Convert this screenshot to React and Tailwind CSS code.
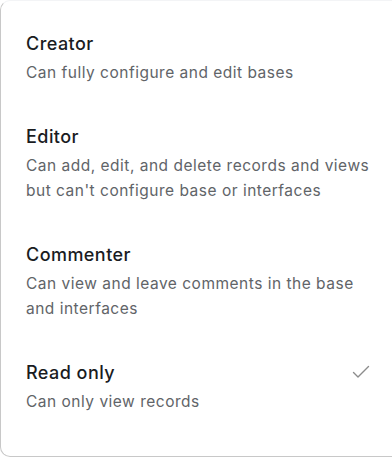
import React from "react";

const items = [
  { title: "Creator", desc: ["Can fully configure and edit bases"] },
  {
    title: "Editor",
    desc: ["Can add, edit, and delete records and views", "but can't configure base or interfaces"],
  },
  { title: "Commenter", desc: ["Can view and leave comments in the base", "and interfaces"] },
  { title: "Read only", desc: ["Can only view records"], checked: true },
];

export default function App() {
  return (
    <div className="w-[392px] h-[458px] bg-white overflow-hidden" style={{ fontFamily: "Inter, 'Noto Sans', sans-serif" }}>
      <div className="h-[457px] w-[400px] border-l border-b border-t border-t-gray-100 border-l-[#c8c8c8] border-b-[#c8c8c8] rounded-bl-[10px] rounded-tl-[10px] pt-[11px] flex flex-col">
        {items.map((it) => (
          <div key={it.title} className="flex items-start pl-[25px] pr-[30px] py-[20px]">
            <div className="flex-1 min-w-0">
              <div className="text-[18px] leading-[24px] font-medium tracking-[0.45px] text-[#1a1c1f]">{it.title}</div>
              <div className="mt-[4px] text-[15.5px] leading-[25px] tracking-[0.5px] text-[#616468]">
                {it.desc.map((d) => (
                  <div key={d} className="whitespace-nowrap">{d}</div>
                ))}
              </div>
            </div>
            {it.checked && (
              <svg width="18" height="14" viewBox="0 0 18 14" className="mt-[4px]" fill="none">
                <path d="M1.5 7.5 L6 12 L16.5 1.5" stroke="#8c8c8c" strokeWidth="1.4" strokeLinecap="round" strokeLinejoin="round" />
              </svg>
            )}
          </div>
        ))}
      </div>
    </div>
  );
}
